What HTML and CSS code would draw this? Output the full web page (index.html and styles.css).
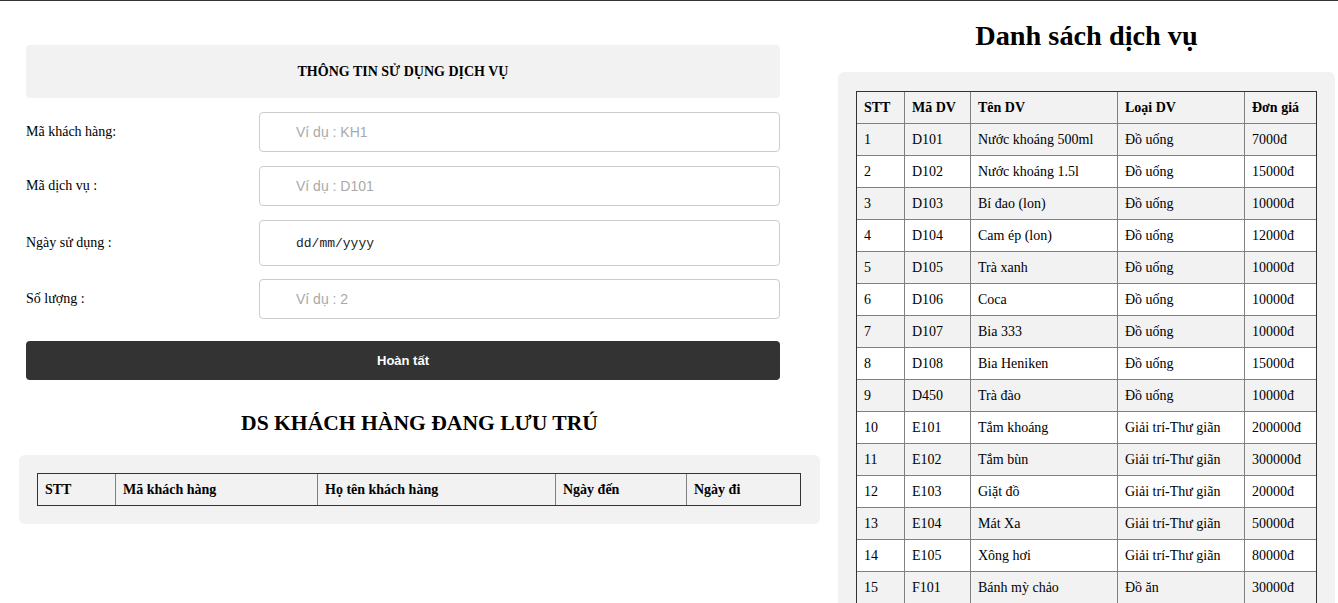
FILE: index.html
```html
<!DOCTYPE html>
<html lang="vi">
<head>
<meta charset="utf-8">
<title>Dịch vụ</title>
<link rel="stylesheet" href="styles.css">
</head>
<body>
<div class="page">
  <div class="left">
    <form class="form">
      <div class="form-title">THÔNG TIN SỬ DỤNG DỊCH VỤ</div>
      <div class="row">
        <label class="lbl">Mã khách hàng:</label>
        <input class="inp" type="text" placeholder="Ví dụ : KH1">
      </div>
      <div class="row">
        <label class="lbl">Mã dịch vụ :</label>
        <input class="inp" type="text" placeholder="Ví dụ : D101">
      </div>
      <div class="row">
        <label class="lbl">Ngày sử dụng :</label>
        <input class="inp inp-date" type="text" value="dd/mm/yyyy">
      </div>
      <div class="row">
        <label class="lbl">Số lượng :</label>
        <input class="inp" type="text" placeholder="Ví dụ : 2">
      </div>
      <button class="btn" type="button">Hoàn tất</button>
    </form>
    <h2 class="sub-title">DS KHÁCH HÀNG ĐANG LƯU TRÚ</h2>
    <div class="box box-guests">
      <table class="tbl tbl-guests">
        <thead>
          <tr>
            <th class="g1">STT</th>
            <th class="g2">Mã khách hàng</th>
            <th class="g3">Họ tên khách hàng</th>
            <th class="g4">Ngày đến</th>
            <th class="g5">Ngày đi</th>
          </tr>
        </thead>
      </table>
    </div>
  </div>
  <div class="right">
    <h1 class="main-title">Danh sách dịch vụ</h1>
    <div class="box box-services">
      <table class="tbl tbl-services">
        <thead>
          <tr>
            <th class="s1">STT</th>
            <th class="s2">Mã DV</th>
            <th class="s3">Tên DV</th>
            <th class="s4">Loại DV</th>
            <th class="s5">Đơn giá</th>
          </tr>
        </thead>
        <tbody>
          <tr><td>1</td><td>D101</td><td>Nước khoáng 500ml</td><td>Đồ uống</td><td>7000đ</td></tr>
          <tr><td>2</td><td>D102</td><td>Nước khoáng 1.5l</td><td>Đồ uống</td><td>15000đ</td></tr>
          <tr><td>3</td><td>D103</td><td>Bí đao (lon)</td><td>Đồ uống</td><td>10000đ</td></tr>
          <tr><td>4</td><td>D104</td><td>Cam ép (lon)</td><td>Đồ uống</td><td>12000đ</td></tr>
          <tr><td>5</td><td>D105</td><td>Trà xanh</td><td>Đồ uống</td><td>10000đ</td></tr>
          <tr><td>6</td><td>D106</td><td>Coca</td><td>Đồ uống</td><td>10000đ</td></tr>
          <tr><td>7</td><td>D107</td><td>Bia 333</td><td>Đồ uống</td><td>10000đ</td></tr>
          <tr><td>8</td><td>D108</td><td>Bia Heniken</td><td>Đồ uống</td><td>15000đ</td></tr>
          <tr><td>9</td><td>D450</td><td>Trà đào</td><td>Đồ uống</td><td>10000đ</td></tr>
          <tr><td>10</td><td>E101</td><td>Tắm khoáng</td><td>Giải trí-Thư giãn</td><td>200000đ</td></tr>
          <tr><td>11</td><td>E102</td><td>Tắm bùn</td><td>Giải trí-Thư giãn</td><td>300000đ</td></tr>
          <tr><td>12</td><td>E103</td><td>Giặt đồ</td><td>Giải trí-Thư giãn</td><td>20000đ</td></tr>
          <tr><td>13</td><td>E104</td><td>Mát Xa</td><td>Giải trí-Thư giãn</td><td>50000đ</td></tr>
          <tr><td>14</td><td>E105</td><td>Xông hơi</td><td>Giải trí-Thư giãn</td><td>80000đ</td></tr>
          <tr><td>15</td><td>F101</td><td>Bánh mỳ chảo</td><td>Đồ ăn</td><td>30000đ</td></tr>
        </tbody>
      </table>
    </div>
  </div>
</div>
</body>
</html>
```

FILE: styles.css
```css
* { box-sizing: border-box; }

html, body {
  margin: 0;
  padding: 0;
  background: #fff;
}

body {
  border-top: 1px solid #333;
  font-family: "Liberation Serif", "Times New Roman", serif;
  font-size: 14px;
  color: #000;
}

.page {
  display: flex;
  align-items: flex-start;
}

.left {
  width: 820px;
  padding: 44px 0 0 19px;
  flex: none;
}

.right {
  width: 497px;
  margin-left: 18px;
  flex: none;
}

.form {
  width: 754px;
  margin-left: 7px;
  display: flex;
  flex-direction: column;
}

.form-title {
  background: #f2f2f2;
  border-radius: 4px;
  height: 53px;
  display: flex;
  align-items: center;
  justify-content: center;
  font-weight: bold;
  font-size: 14px;
  margin-bottom: 14px;
}

.row {
  display: flex;
  align-items: center;
  margin-bottom: 14px;
}

.row:nth-of-type(4) { margin-bottom: 13px; }
.row:last-of-type { margin-bottom: 0; }

.lbl {
  width: 233px;
  flex: none;
  font-size: 14px;
}

.inp {
  flex: 1;
  height: 40px;
  border: 1px solid #ccc;
  border-radius: 4px;
  padding: 0 36px;
  font-family: "Liberation Sans", Arial, sans-serif;
  font-size: 14px;
  color: #333;
  background: #fff;
  outline: none;
}

.inp::placeholder { color: #a9a9a9; }

.inp-date {
  height: 46px;
  font-family: "Liberation Mono", "Courier New", monospace;
  font-size: 13px;
  color: #222;
}

.btn {
  margin-top: 22px;
  height: 39px;
  background: #333;
  color: #fff;
  border: none;
  border-radius: 4px;
  font-family: "Liberation Sans", Arial, sans-serif;
  font-weight: bold;
  font-size: 13px;
  padding: 0;
}

.sub-title {
  margin: 28px 0 17px;
  text-align: center;
  font-size: 21.6px;
  font-weight: bold;
  line-height: 30px;
}

.main-title {
  margin: 19px 0 20px;
  text-align: center;
  font-size: 28.3px;
  font-weight: bold;
  line-height: 32px;
}

.box {
  background: #f2f2f2;
  border-radius: 6px;
  padding: 18px;
}

.box-guests { width: 801px; padding-right: 19px; }
.box-services { padding-top: 19px; padding-right: 19px; }

.tbl {
  border-collapse: collapse;
  width: 100%;
  table-layout: fixed;
  outline: 1px solid #333;
  outline-offset: -1px;
}

.tbl th,
.tbl td {
  border: 1px solid #808080;
  padding: 7px 7px;
  line-height: 17px;
  text-align: left;
  font-size: 14px;
  white-space: nowrap;
}

.tbl th { font-weight: bold; }

.tbl-services tbody tr:nth-child(even) { background: #fff; }

.g1 { width: 78px; }
.g2 { width: 202px; }
.g3 { width: 238px; }
.g4 { width: 131px; }
.g5 { width: 114px; }

.s1 { width: 48px; }
.s2 { width: 66px; }
.s3 { width: 147px; }
.s4 { width: 127px; }
.s5 { width: 72px; }
```
